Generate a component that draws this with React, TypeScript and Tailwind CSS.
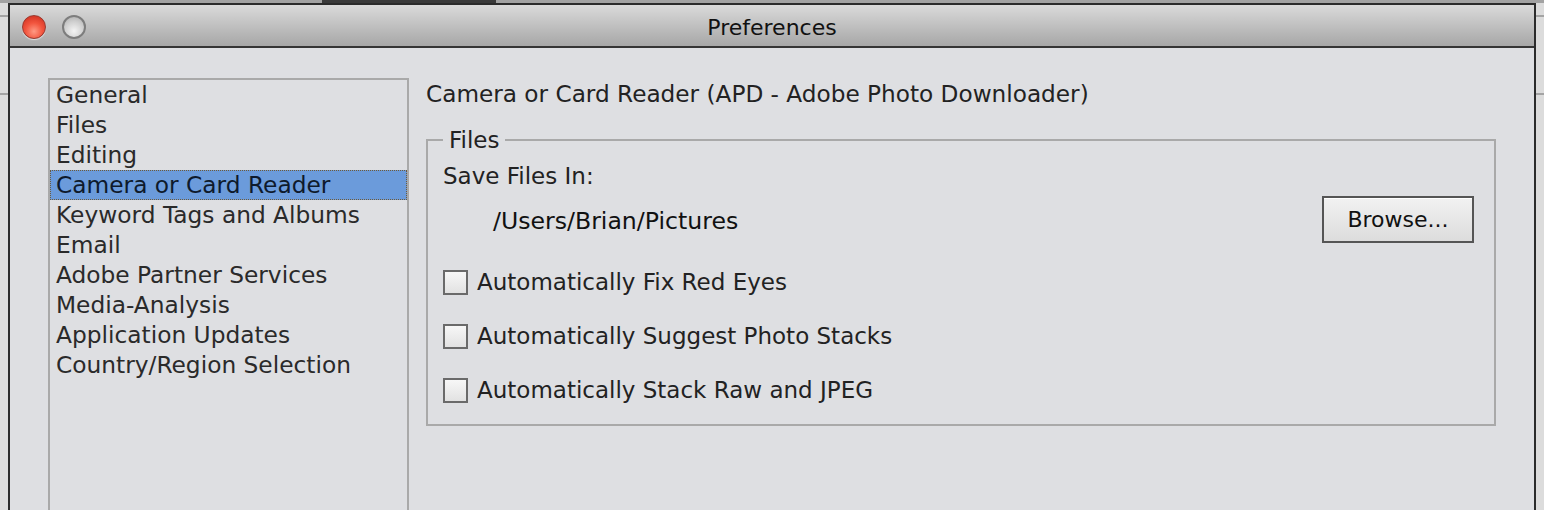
import React from 'react';

const items = [
  'General',
  'Files',
  'Editing',
  'Camera or Card Reader',
  'Keyword Tags and Albums',
  'Email',
  'Adobe Partner Services',
  'Media-Analysis',
  'Application Updates',
  'Country/Region Selection',
];

const options = [
  'Automatically Fix Red Eyes',
  'Automatically Suggest Photo Stacks',
  'Automatically Stack Raw and JPEG',
];

function SideStrip() {
  return (
    <div className="w-[8px] shrink-0 flex flex-col">
      <div className="h-[12px]" />
      <div className="h-[2px] bg-[#a4a4a4]" />
      <div className="h-[76px]" />
      <div className="h-[2px] bg-[#a4a4a4]" />
    </div>
  );
}

function Checkbox({ label }: { label: string }) {
  const [checked, setChecked] = React.useState(false);
  return (
    <label className="flex items-center h-[30px] cursor-default" onClick={() => setChecked(!checked)}>
      <span className="w-[25px] h-[25px] border-2 border-[#6a6a6a] bg-gradient-to-b from-[#f7f7f7] to-[#e2e2e2] flex items-center justify-center text-[18px] leading-none">
        {checked ? '✓' : ''}
      </span>
      <span className="ml-[9px]">{label}</span>
    </label>
  );
}

export default function App() {
  const [selected, setSelected] = React.useState(3);

  return (
    <div
      className="w-[1544px] h-[510px] overflow-hidden bg-[#dcdcdc] flex flex-col text-[#222]"
      style={{ fontFamily: '"DejaVu Sans", "Liberation Sans", sans-serif' }}
    >
      <div className="h-[3px] shrink-0 bg-[#a2a2a2] flex">
        <div className="w-[322px]" />
        <div className="w-[174px] bg-[#3a3a3a]" />
      </div>
      <div className="flex flex-1 min-h-0">
        <SideStrip />
        {/* window */}
        <div className="w-[1528px] shrink-0 border-2 border-b-0 border-[#2b2b2b] flex flex-col bg-[#dedfe2]">
          <div className="h-[43px] shrink-0 border-b-2 border-[#353535] bg-gradient-to-b from-[#dadada] to-[#a7a7a7] flex items-center">
            <div className="flex items-center gap-[16px] pl-[12px] pt-[2px]">
              <span className="w-[24px] h-[24px] rounded-full border border-[#9a3a30] bg-[radial-gradient(circle_at_50%_70%,#ff9a84_0%,#f2553e_45%,#c8281a_100%)] shadow-[0_1px_1px_rgba(255,255,255,0.6)]" />
              <span className="w-[24px] h-[24px] rounded-full border-2 border-[#7d7d7d] bg-[radial-gradient(circle_at_50%_70%,#f4f4f4_0%,#cfcfcf_55%,#a9a9a9_100%)]" />
            </div>
            <div className="flex-1 text-center text-[22px] text-[#111] pr-[76px] pt-[4px]">Preferences</div>
          </div>

          <div className="flex flex-1 min-h-0 pt-[30px] pl-[38px] pr-[38px]">
            {/* category list */}
            <div className="w-[361px] shrink-0 border-2 border-b-0 border-[#a9a9a9] text-[23.3px] leading-[30px] text-[#2a2a2a]">
              {items.map((it, i) => (
                <div
                  key={it}
                  onClick={() => setSelected(i)}
                  className={
                    i === selected
                      ? 'h-[30px] pl-[6px] bg-[#6b9bdb] text-[#0e1a2c] outline-1 outline-dotted outline-[#6d5a3a] -outline-offset-1'
                      : 'h-[30px] pl-[6px]'
                  }
                >
                  {it}
                </div>
              ))}
            </div>

            {/* content */}
            <div className="flex-1 ml-[17px] pt-[1px] text-[23px]">
              <div className="leading-[30px] text-[#222] text-[23.2px]">Camera or Card Reader (APD - Adobe Photo Downloader)</div>
              <fieldset className="mt-[16px] border-2 border-[#a9a9a9] pl-[15px] pr-[20px] pb-[19px]">
                <legend className="ml-0 px-[6px] leading-[30px]">Files</legend>
                <div className="leading-[30px] mt-[6px]">Save Files In:</div>
                <div className="flex items-center justify-between mt-[5px]">
                  <span className="pl-[50px] leading-[30px] pt-[3px] text-[23.6px] text-[#111]">/Users/Brian/Pictures</span>
                  <button className="w-[152px] h-[47px] border-2 border-[#555] bg-gradient-to-b from-[#f2f2f2] to-[#dcdcdc] text-[22px] text-[#111] shadow-[inset_0_1px_0_#fff]">
                    Browse...
                  </button>
                </div>
                <div className="flex flex-col gap-[24px] mt-[24px]">
                  {options.map((o) => (
                    <Checkbox key={o} label={o} />
                  ))}
                </div>
              </fieldset>
            </div>
          </div>
        </div>
        <SideStrip />
      </div>
    </div>
  );
}
